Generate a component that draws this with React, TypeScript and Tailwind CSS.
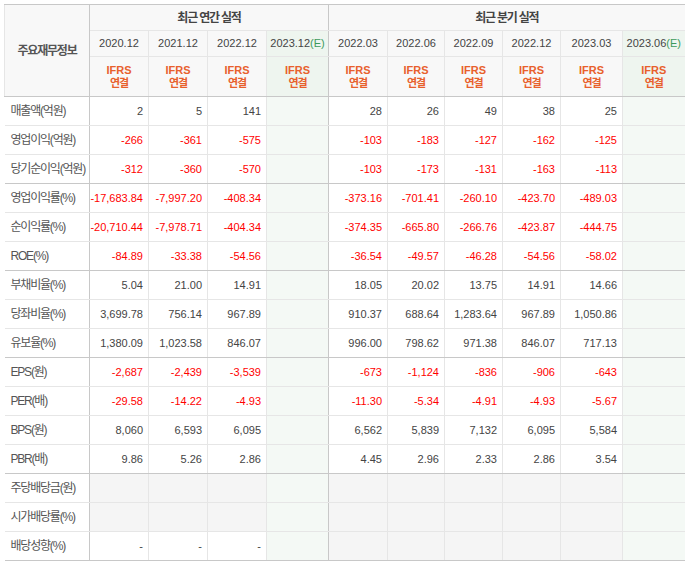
import React from "react";

type Cell = string | null;

interface Row {
  label: string;
  annual: Cell[];
  quarter: Cell[];
  groupEnd?: boolean;
}

const annualHeads = ["2020.12", "2021.12", "2022.12"];
const quarterHeads = ["2022.03", "2022.06", "2022.09", "2022.12", "2023.03"];

const rows: Row[] = [
  { label: "매출액(억원)", annual: ["2", "5", "141"], quarter: ["28", "26", "49", "38", "25"] },
  { label: "영업이익(억원)", annual: ["-266", "-361", "-575"], quarter: ["-103", "-183", "-127", "-162", "-125"] },
  {
    label: "당기순이익(억원)",
    annual: ["-312", "-360", "-570"],
    quarter: ["-103", "-173", "-131", "-163", "-113"],
    groupEnd: true,
  },
  {
    label: "영업이익률(%)",
    annual: ["-17,683.84", "-7,997.20", "-408.34"],
    quarter: ["-373.16", "-701.41", "-260.10", "-423.70", "-489.03"],
  },
  {
    label: "순이익률(%)",
    annual: ["-20,710.44", "-7,978.71", "-404.34"],
    quarter: ["-374.35", "-665.80", "-266.76", "-423.87", "-444.75"],
  },
  {
    label: "ROE(%)",
    annual: ["-84.89", "-33.38", "-54.56"],
    quarter: ["-36.54", "-49.57", "-46.28", "-54.56", "-58.02"],
    groupEnd: true,
  },
  { label: "부채비율(%)", annual: ["5.04", "21.00", "14.91"], quarter: ["18.05", "20.02", "13.75", "14.91", "14.66"] },
  {
    label: "당좌비율(%)",
    annual: ["3,699.78", "756.14", "967.89"],
    quarter: ["910.37", "688.64", "1,283.64", "967.89", "1,050.86"],
  },
  {
    label: "유보율(%)",
    annual: ["1,380.09", "1,023.58", "846.07"],
    quarter: ["996.00", "798.62", "971.38", "846.07", "717.13"],
    groupEnd: true,
  },
  { label: "EPS(원)", annual: ["-2,687", "-2,439", "-3,539"], quarter: ["-673", "-1,124", "-836", "-906", "-643"] },
  { label: "PER(배)", annual: ["-29.58", "-14.22", "-4.93"], quarter: ["-11.30", "-5.34", "-4.91", "-4.93", "-5.67"] },
  { label: "BPS(원)", annual: ["8,060", "6,593", "6,095"], quarter: ["6,562", "5,839", "7,132", "6,095", "5,584"] },
  {
    label: "PBR(배)",
    annual: ["9.86", "5.26", "2.86"],
    quarter: ["4.45", "2.96", "2.33", "2.86", "3.54"],
    groupEnd: true,
  },
  { label: "주당배당금(원)", annual: [null, null, null], quarter: [null, null, null, null, null] },
  { label: "시가배당률(%)", annual: [null, null, null], quarter: [null, null, null, null, null] },
  { label: "배당성향(%)", annual: ["-", "-", "-"], quarter: [null, null, null, null, null] },
];

const font = "font-['Liberation_Sans','Noto_Sans_CJK_KR',sans-serif]";
const kr = "tracking-[-1.2px]";

const Ifrs = () => (
  <div className="font-bold text-[11px] leading-[13px] text-[#e8602c]">
    IFRS
    <br />
    <span className={kr}>연결</span>
  </div>
);

const DataCell = ({ value, sep, last }: { value: Cell; sep: string; last?: boolean }) => {
  const neg = value !== null && value.startsWith("-") && value !== "-";
  const bg = value === null ? "bg-[#f5f5f5]" : "bg-white";
  return (
    <td
      className={`h-[29px] border border-[#e6e6e6] ${sep} ${bg} pr-[5px] text-right text-[11px] ${
        neg ? "text-[#ff0000]" : "text-[#444]"
      } ${last ? "" : ""}`}
    >
      {value}
    </td>
  );
};

const EstCell = ({ sep, divider }: { sep: string; divider?: boolean }) => (
  <td
    className={`h-[29px] border border-[#e6e6e6] ${sep} bg-[#f4f9f5] ${divider ? "border-r-[#c8c8c8]" : ""}`}
  />
);

export default function App() {
  const widths = [85, 59, 59, 59, 62, 59, 57, 58, 58, 62, 62];
  return (
    <div className={`bg-white pl-[4px] pt-[4px] ${font}`}>
      <table className="w-[680px] table-fixed border-collapse">
        <colgroup>
          {widths.map((w, i) => (
            <col key={i} style={{ width: w }} />
          ))}
        </colgroup>
        <thead>
          <tr className="h-[26px]">
            <th
              rowSpan={3}
              className={`border border-[#e6e6e6] border-t-[#c8c8c8] border-r-[#c8c8c8] border-b-[#c8c8c8] bg-[#f8f8f8] text-[12px] font-bold text-[#555] ${kr}`}
            >
              주요재무정보
            </th>
            <th
              colSpan={4}
              className={`border border-[#e6e6e6] border-t-[#c8c8c8] border-r-[#c8c8c8] bg-[#f8f8f8] text-[12px] font-bold text-[#444] ${kr}`}
            >
              최근 연간 실적
            </th>
            <th
              colSpan={6}
              className={`border border-[#e6e6e6] border-t-[#c8c8c8] border-r-0 bg-[#f8f8f8] text-[12px] font-bold text-[#444] ${kr}`}
            >
              최근 분기 실적
            </th>
          </tr>
          <tr className="h-[26px]">
            {annualHeads.map((h) => (
              <th key={h} className="border border-[#e6e6e6] bg-[#f8f8f8] text-[11px] font-normal text-[#444]">
                {h}
              </th>
            ))}
            <th className="border border-[#e6e6e6] border-r-[#c8c8c8] bg-[#eef5ef] text-[11px] font-normal text-[#444]">
              2023.12<span className="text-[#3c9a5c]">(E)</span>
            </th>
            {quarterHeads.map((h) => (
              <th key={h} className="border border-[#e6e6e6] bg-[#f8f8f8] text-[11px] font-normal text-[#444]">
                {h}
              </th>
            ))}
            <th className="border border-[#e6e6e6] border-r-0 bg-[#eef5ef] text-[11px] font-normal text-[#444]">
              2023.06<span className="text-[#3c9a5c]">(E)</span>
            </th>
          </tr>
          <tr className="h-[40px]">
            {[0, 1, 2].map((i) => (
              <th key={i} className="border border-[#e6e6e6] border-b-[#c8c8c8] bg-[#f8f8f8]">
                <Ifrs />
              </th>
            ))}
            <th className="border border-[#e6e6e6] border-b-[#c8c8c8] border-r-[#c8c8c8] bg-[#eef5ef]">
              <Ifrs />
            </th>
            {[0, 1, 2, 3, 4].map((i) => (
              <th key={i} className="border border-[#e6e6e6] border-b-[#c8c8c8] bg-[#f8f8f8]">
                <Ifrs />
              </th>
            ))}
            <th className="border border-[#e6e6e6] border-b-[#c8c8c8] border-r-0 bg-[#eef5ef]">
              <Ifrs />
            </th>
          </tr>
        </thead>
        <tbody>
          {rows.map((r, idx) => {
            const sep = r.groupEnd || idx === rows.length - 1 ? "border-b-[#c8c8c8]" : "";
            return (
              <tr key={r.label} className="h-[29px]">
                <td
                  className={`h-[29px] border border-[#e6e6e6] border-l-0 border-r-[#c8c8c8] ${sep} bg-white pl-[6px] text-left text-[12px] text-[#555] ${kr}`}
                >
                  {r.label}
                </td>
                {r.annual.map((v, i) => (
                  <DataCell key={i} value={v} sep={sep} />
                ))}
                <EstCell sep={sep} divider />
                {r.quarter.map((v, i) => (
                  <DataCell key={i} value={v} sep={sep} />
                ))}
                <EstCell sep={`${sep} border-r-0`} />
              </tr>
            );
          })}
        </tbody>
      </table>
    </div>
  );
}
